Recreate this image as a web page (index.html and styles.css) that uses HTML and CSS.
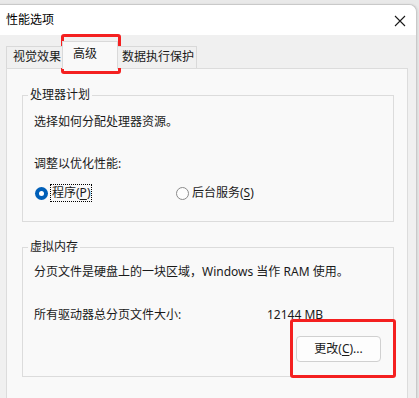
FILE: index.html
```html
<!DOCTYPE html>
<html lang="zh-CN">
<head>
    <meta charset="UTF-8">
    <title>性能选项</title>
    <link rel="stylesheet" href="styles.css">
</head>
<body>

<div class="window">
    <!-- Title bar -->
    <div class="titlebar">
        <span class="title">性能选项</span>
        <svg class="close" width="12" height="12" viewBox="0 0 12 12">
            <path d="M1 1 L11 11 M11 1 L1 11" stroke="#1a1a1a" stroke-width="1.1" fill="none"/>
        </svg>
    </div>

    <div class="content">
        <div class="tabs">
            <div class="tab tab-visual">视觉效果</div>
            <div class="tab tab-advanced active">高级</div>
            <div class="tab tab-dep">数据执行保护</div>
        </div>

        <div class="panel">
            <fieldset class="group group-cpu">
                <legend>处理器计划</legend>
                <p class="line first">选择如何分配处理器资源。</p>
                <p class="line adjust">调整以优化性能:</p>
                <div class="radios">
                    <label class="radio-item programs">
                        <span class="radio checked"></span>
                        <span class="focus">程序(<u>P</u>)</span>
                    </label>
                    <label class="radio-item">
                        <span class="radio"></span>
                        <span>后台服务(<u>S</u>)</span>
                    </label>
                </div>
            </fieldset>

            <fieldset class="group group-mem">
                <legend>虚拟内存</legend>
                <p class="line first">分页文件是硬盘上的一块区域，Windows 当作 RAM 使用。</p>
                <div class="size-row">
                    <span>所有驱动器总分页文件大小:</span>
                    <span>12144 MB</span>
                </div>
                <div class="btn-row">
                    <button class="btn">更改(<u>C</u>)...</button>
                </div>
            </fieldset>
        </div>
    </div>
</div>

<!-- annotation boxes -->
<div class="mark mark-tab"></div>
<div class="mark mark-btn"></div>

</body>
</html>
```

FILE: styles.css
```css
* { box-sizing: border-box; }
body { margin: 0; background: #e9e9e9; font-family: "Noto Sans", "Noto Sans CJK SC", sans-serif; font-size: 12px; line-height: 16px; color: #1a1a1a; overflow: hidden; height: 398px; }

.window { width: 427px; margin: 4px 0 0 -10px; border: 1px solid #c9c9c9; border-bottom: none; border-radius: 8px 8px 0 0; background: #f0f0f0; height: 400px; box-shadow: 1px 0 2px rgba(0, 0, 0, 0.08); overflow: hidden; }

.titlebar { height: 30px; background: #fff; display: flex; align-items: center; justify-content: space-between; padding: 0 10px 0 15px; }
.title { font-size: 12px; color: #000; }
.close { display: block; margin-top: 1px; }

.content { padding: 6px 0 0 15px; }

/* Tabs */
.tabs { display: flex; align-items: flex-end; margin-bottom: -1px; position: relative; z-index: 1; }
.tab { height: 22px; border: 1px solid #d9d9d9; border-bottom: none; background: #f0f0f0; white-space: nowrap; line-height: 19px; margin-bottom: 1px; }
.tab-visual { width: 57px; padding-left: 6px; }
.tab-advanced { width: 56px; margin-left: -1px; padding-left: 10px; }
.tab-dep { width: 80px; margin-left: -1px; padding-left: 4px; }
.tab.active { height: 28px; background: #f9f9f9; margin-bottom: 0; line-height: 22px; padding-top: 1px; position: relative; z-index: 2; }

/* Panel */
.panel { width: 402px; height: 340px; background: #f9f9f9; border: 1px solid #dcdcdc; padding: 18px 0 0 15px; }

.group { width: 372px; margin: 0; border: 1px solid #dcdcdc; padding: 0 12px 0 11px; }
.group legend { padding: 0 2px; margin-left: -6px; line-height: 16px; }
.group-cpu { padding-bottom: 20px; }
.group-mem { margin-top: 17px; padding-bottom: 14px; }

.line { margin: 0; }
.group-cpu .first { margin-top: 11px; }
.group-cpu .adjust { margin-top: 26px; }
.group-mem .first { margin-top: 9px; }

/* Radios */
.radios { display: flex; margin-top: 13px; }
.radio-item { display: flex; align-items: center; gap: 3px; }
.radio-item.programs { width: 142px; padding-left: 1px; }
.radio { width: 13px; height: 13px; border-radius: 50%; border: 1px solid #8a8a8a; background: #fdfdfd; display: inline-block; }
.radio.checked { border: none; background: #005fb8; display: flex; align-items: center; justify-content: center; }
.radio.checked::after { content: ""; width: 5px; height: 5px; border-radius: 50%; background: #fff; }
.focus { outline: 1px dotted #000; outline-offset: 0; padding: 0 1px; }
u { text-underline-offset: 2px; }

.size-row { display: grid; grid-template-columns: 233px auto; margin-top: 27px; }

.btn-row { display: flex; justify-content: flex-end; margin-top: 13px; }
.btn { width: 85px; height: 26px; background: #fdfdfd; border: 1px solid #d0d0d0; border-radius: 4px; font: inherit; color: #1a1a1a; padding: 0; }

/* Red annotation boxes */
.mark { position: absolute; border: 3px solid #f42020; border-radius: 3px; pointer-events: none; }
.mark-tab { left: 61px; top: 34px; width: 60px; height: 40px; }
.mark-btn { left: 290px; top: 319px; width: 106px; height: 59px; }
```
